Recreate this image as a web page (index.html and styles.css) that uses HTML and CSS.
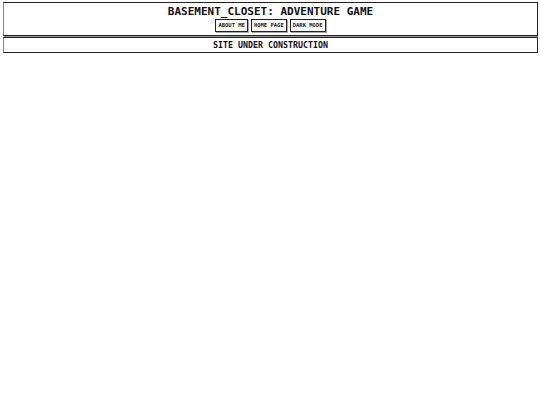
FILE: index.html
```html
<!DOCTYPE html>
<html>
<head>
<meta charset="utf-8">
<link rel="stylesheet" href="styles.css">
</head>
<body>
<header class="header">
  <h1 class="title">BASEMENT_CLOSET: ADVENTURE GAME</h1>
  <nav class="nav">
    <button class="btn">ABOUT ME</button>
    <button class="btn">HOME PAGE</button>
    <button class="btn">DARK MODE</button>
  </nav>
</header>
<section class="notice">SITE UNDER CONSTRUCTION</section>
</body>
</html>
```
FILE: styles.css
```css
html, body {
  background: #fff;
}
body {
  margin: 2px 2px 2px 3px;
  font-family: "DejaVu Sans Mono", monospace;
  color: #111;
}
.header {
  border: 1px solid #222;
  border-left-color: #888;
  box-shadow: -1px 0 0 #888, 1px 1px 0 #999;
  display: flex;
  flex-direction: column;
  align-items: center;
  padding: 3px 0 3px;
  height: 26px;
  box-sizing: content-box;
}
.title {
  margin: 0;
  font-size: 11px;
  font-weight: bold;
  line-height: 12px;
}
.nav {
  display: flex;
  gap: 3px;
  margin-top: 1px;
}
.btn {
  font-family: "DejaVu Sans Mono", monospace;
  font-size: 5.5px;
  font-weight: bold;
  background: #fff;
  color: #222;
  border: 1px solid #222;
  box-shadow: 1px 1px 0 #aaa;
  padding: 0 2px;
  height: 13px;
  line-height: 11px;
}
.notice {
  margin-top: 1px;
  border: 1px solid #222;
  border-left-color: #888;
  box-shadow: -1px 0 0 #888, 1px 1px 0 #999;
  text-align: center;
  font-size: 8.3px;
  font-weight: bold;
  line-height: 14px;
}
```
